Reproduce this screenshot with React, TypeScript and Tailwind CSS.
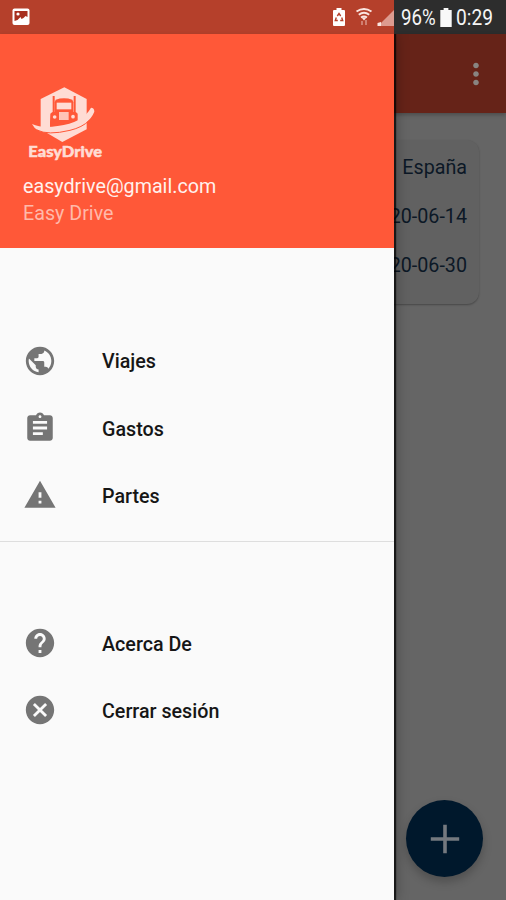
import type { ReactNode } from 'react'
import type { IconType } from 'react-icons'
import { MdAssignment, MdCancel, MdHelp, MdMoreVert, MdPublic, MdWarning } from 'react-icons/md'

type MenuEntry = { label: string; icon: IconType }

const mainEntries: MenuEntry[] = [
  { label: 'Viajes', icon: MdPublic },
  { label: 'Gastos', icon: MdAssignment },
  { label: 'Partes', icon: MdWarning },
]

const accountEntries: MenuEntry[] = [
  { label: 'Acerca De', icon: MdHelp },
  { label: 'Cerrar sesión', icon: MdCancel },
]

function Logo() {
  return (
    <svg width="110" height="95" viewBox="0 0 330 285" className="block">
      <path d="M148 37 L215 72 V163 L142 201 L77 163 V72 Z" fill="#ffdcd4" />
      {/* Truck */}
      <g fill="#ff5838">
        <path d="M113 63h6v50h-6zM176 63h6v50h-6z" />
        <path d="M122 74q25-8 50 0l3 8v32h-56V82z" />
        <path d="M106 116q8-9 17-4h49q9-5 16 4v25q-36 16-83 15v-14z" />
      </g>
      <path d="M125 83h44v20h-44z" fill="#ffdcd4" />
      <path d="M132 111h29v24h-29z" fill="#ffc4b7" />
      <circle cx="119" cy="126" r="5.5" fill="#ffdcd4" />
      <circle cx="174" cy="125" r="5.5" fill="#ffdcd4" />
      {/* Road swoosh */}
      <path d="M51 147Q82 161 128 153Q204 143 228 98Q238 98 238 110Q222 150 165 164Q70 189 51 147Z" fill="#ffdcd4" />
      <path d="M66 165Q98 182 165 166Q202 157 222 137" fill="none" stroke="#ff5838" strokeWidth="3" />
      <text x="40" y="246" textLength="221" lengthAdjust="spacingAndGlyphs" fill="#ffdcd4" stroke="#ffdcd4" strokeWidth="1.5" fontSize="47" fontWeight="900" fontFamily="Lato, sans-serif">
        EasyDrive
      </text>
    </svg>
  )
}

function StatusBar() {
  return (
    <header className="flex h-[34px] shrink-0">
      <div className="flex w-[394px] items-center bg-[#b5402b] pl-3">
        <svg width="18" height="18" viewBox="0 0 18 18">
          <rect x="0.5" y="0.5" width="17" height="16.5" rx="2" fill="#fff" />
          <path d="M2.5 3h13v6l-2-1-2 2-2 1-1-2-3 3-3 1z" fill="#a8301f" />
          <circle cx="6" cy="6" r="1.6" fill="#fff" />
        </svg>
        <svg width="62" height="22" viewBox="0 0 62 22" className="ml-auto">
          {/* Battery saver */}
          <path d="M4.500 2h5v2H12q1 0 1 1v14q0 1-1 1H2q-1 0-1-1V5q0-1 1-1h2.500z" fill="#fff" />
          <path d="M5.300 10l1.700-2.500L8.700 10M4.300 11.500L3.300 14.500h2.500M9.700 11.500l1 3H8.200" fill="none" stroke="#b5402b" strokeWidth="1.4" />
          {/* Wi-fi with traffic arrows */}
          <g fill="none" stroke="#fae5e0" strokeWidth="2">
            <path d="M24.500 5.500q7.500-5 15 0M26.800 8.700q5.200-3.800 10.400 0M29 11.500q3-2 6 0" />
          </g>
          <path d="M29.500 11.500h5l-2.500 3z" fill="#fae5e0" />
          <path d="M30 15v4M34 14v5" stroke="#d99589" strokeWidth="1.500" />
          <path d="M46 20L62 4v16z" fill="#dd9b8f" />
          <path d="M45.500 20v-3l3.500-1v4z" fill="#fae5e0" />
        </svg>
      </div>
      <div className="flex flex-1 items-center bg-[#2d2d2d] pt-px pl-[7px] text-[22px] leading-none text-[#f5f5f5]">
        <span className="w-[35px] origin-left scale-x-[0.85] whitespace-nowrap">96%</span>
        <svg width="12" height="19" viewBox="0 0 12 20" className="ml-[4px]">
          <path d="M3.500 0h5v2H12v18H0V2h3.500z" fill="#f8f8f8" />
        </svg>
        <span className="ml-[4px] origin-left scale-x-[0.87] whitespace-nowrap">0:29</span>
      </div>
    </header>
  )
}

function TripsScreen() {
  return (
    <main className="flex flex-1 flex-col bg-[#656565]">
      <div className="flex h-[79px] shrink-0 items-center justify-end bg-[#662318] pr-[13px] shadow-[0_2px_4px_rgba(0,0,0,0.25)]">
        <MdMoreVert size={34} color="#898481" />
      </div>
      <div className="mt-[27px] mr-[27px] flex h-[164px] flex-col items-end rounded-xl bg-[#616161] pt-[3px] pr-3 text-[19.7px] text-[#0c1826] shadow-[0_1px_2px_rgba(0,0,0,0.3)]">
        <p className="flex h-[49px] items-center">España</p>
        <p className="flex h-[49px] items-center">2020-06-14</p>
        <p className="flex h-[49px] items-center">2020-06-30</p>
      </div>
      <button className="mt-auto mr-[23px] mb-[23px] flex size-[77px] items-center justify-center self-end rounded-full bg-[#00182c] shadow-[0_5px_10px_rgba(0,0,0,0.22)]">
        <svg width="30" height="30" viewBox="0 0 30 30" fill="none" stroke="#74797f" strokeWidth="3.6">
          <path d="M15 0.800v28.400M0.800 15h28.400" />
        </svg>
      </button>
    </main>
  )
}

function MenuGroup({ entries }: { entries: MenuEntry[] }) {
  return (
    <ul>
      {entries.map(({ label, icon: Icon }) => (
        <li key={label} className="flex h-[67.4px] items-center pl-[23px]">
          <Icon size={34} color="#757575" />
          <span className="ml-[45px] pt-[3px] text-[19.7px] font-medium text-[#161616]">{label}</span>
        </li>
      ))}
    </ul>
  )
}

function Drawer({ children }: { children: ReactNode }) {
  return (
    <nav className="absolute top-[34px] bottom-0 left-0 flex w-[394px] flex-col bg-[#fafafa] shadow-[1px_0_1px_1px_rgba(0,0,0,0.7),2px_0_12px_rgba(0,0,0,0.3)] [clip-path:inset(0_-24px_0_0)]">
      {children}
    </nav>
  )
}

export default function App() {
  return (
    <div className="relative flex h-[900px] w-[506px] flex-col overflow-hidden font-[Roboto,sans-serif]">
      <StatusBar />
      <TripsScreen />
      <Drawer>
        <section className="h-[214px] bg-[#ff5838] pt-[41px]">
          <div className="pl-[15px]">
            <Logo />
          </div>
          <p className="mt-[3px] pl-[23px] text-[19.7px] leading-[27px] text-[#fff1ed]">easydrive@gmail.com</p>
          <p className="pl-[23px] text-[19.7px] leading-[27px] text-[#ffb9aa]">Easy Drive</p>
        </section>
        <div className="pt-[79px]">
          <MenuGroup entries={mainEntries} />
        </div>
        <div className="mt-[12px] border-t border-[#dedede] pt-[67px]">
          <MenuGroup entries={accountEntries} />
        </div>
      </Drawer>
    </div>
  )
}
